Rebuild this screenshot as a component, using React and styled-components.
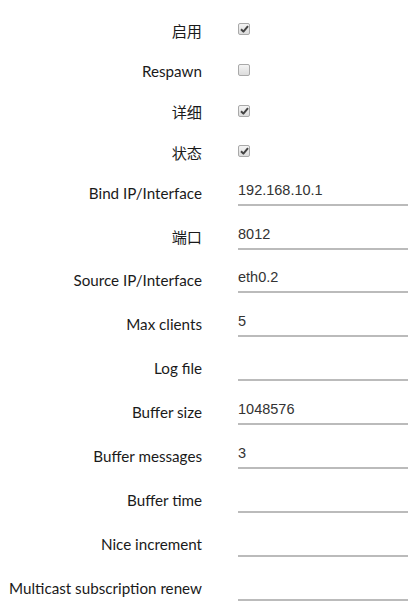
import React from 'react';
import styled, { createGlobalStyle } from 'styled-components';

const GlobalStyle = createGlobalStyle`
    html, body {
        margin: 0;
        padding: 0;
        background: #fff;
    }
`;

const StyledForm = styled.div`
    width: 408px;
    padding-top: 9px;
    font-family: Lato, "Noto Sans CJK SC", sans-serif;
    color: #1a1a1a;
`;

const StyledRow = styled.div`
    display: grid;
    grid-template-columns: 202px 1fr;
    column-gap: 36px;
    height: ${props => (props.$check ? '40.67px' : '43.9px')};
    align-items: ${props => (props.$check ? 'center' : 'start')};
`;

const StyledLabel = styled.label`
    font-size: 15.2px;
    line-height: 20px;
    text-align: right;
    white-space: nowrap;
    padding-top: ${props => (props.$check ? '3px' : '11px')};
`;

const StyledBox = styled.span`
    display: flex;
    align-items: center;
    justify-content: center;
    width: 10px;
    height: 10px;
    border: 1px solid #a9a9a9;
    border-radius: 2px;
    background: linear-gradient(#f4f4f4, #dcdcdc);
`;

const StyledInput = styled.input`
    box-sizing: border-box;
    width: 100%;
    height: 30px;
    margin: 4px 0 0;
    padding: 0;
    border: 0;
    border-bottom: 2px solid #bbb;
    outline: none;
    background: transparent;
    font-family: "Liberation Sans", Arial, sans-serif;
    font-size: 14.5px;
    color: #333;
`;

function Checkbox({ checked }) {
    return (
        <StyledBox>
            {checked && (
                <svg width="9" height="8" viewBox="0 0 9 8">
                    <path d="M1 4.2 L3.4 6.6 L8 1.2" fill="none" stroke="#444" strokeWidth="2" strokeLinejoin="round" />
                </svg>
            )}
        </StyledBox>
    );
}

const checks = [
    { label: '启用', checked: true },
    { label: 'Respawn', checked: false },
    { label: '详细', checked: true },
    { label: '状态', checked: true },
];

const fields = [
    { label: 'Bind IP/Interface', value: '192.168.10.1' },
    { label: '端口', value: '8012' },
    { label: 'Source IP/Interface', value: 'eth0.2' },
    { label: 'Max clients', value: '5' },
    { label: 'Log file', value: '' },
    { label: 'Buffer size', value: '1048576' },
    { label: 'Buffer messages', value: '3' },
    { label: 'Buffer time', value: '' },
    { label: 'Nice increment', value: '' },
    { label: 'Multicast subscription renew', value: '' },
];

export default function App() {
    return (
        <>
            <GlobalStyle />
            <StyledForm>
                {checks.map(item => (
                    <StyledRow $check key={item.label}>
                        <StyledLabel $check>{item.label}</StyledLabel>
                        <Checkbox checked={item.checked} />
                    </StyledRow>
                ))}
                {fields.map(item => (
                    <StyledRow key={item.label}>
                        <StyledLabel>{item.label}</StyledLabel>
                        <StyledInput defaultValue={item.value} />
                    </StyledRow>
                ))}
            </StyledForm>
        </>
    );
}
